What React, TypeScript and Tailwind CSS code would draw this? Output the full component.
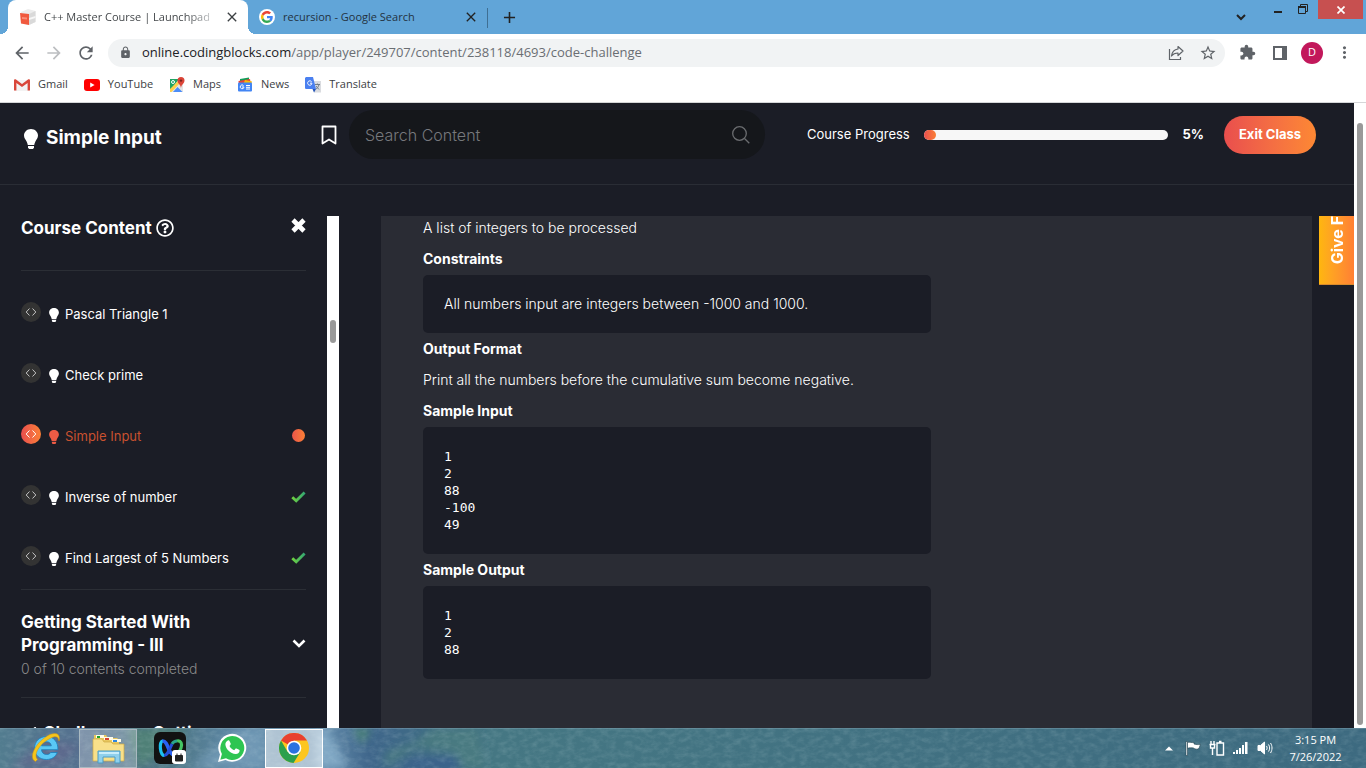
import type { ReactNode } from "react";
import { FaRegQuestionCircle, FaBullhorn } from "react-icons/fa";
import {
  MdArrowBack,
  MdArrowForward,
  MdRefresh,
  MdLock,
  MdStarBorder,
  MdExtension,
  MdMoreVert,
  MdClose,
  MdAdd,
} from "react-icons/md";

type Lesson = { title: string; status: "none" | "active" | "done" };

const lessons: Lesson[] = [
  { title: "Pascal Triangle 1", status: "none" },
  { title: "Check prime", status: "none" },
  { title: "Simple Input", status: "active" },
  { title: "Inverse of number", status: "done" },
  { title: "Find Largest of 5 Numbers", status: "done" },
];

const progress = 5;

/* ---------- small drawings ---------- */

function Bulb({ className }: { className: string }) {
  return (
    <svg viewBox="0 0 14 20" className={className} fill="currentColor" aria-hidden="true">
      <path d="M7 0C3 0 0 2.900 0 6.600c0 2.700 1.600 4 2.600 6 .6 1.200.9 2.400 1.200 3.400h6.400c.3-1 .6-2.200 1.200-3.400 1-2 2.600-3.300 2.600-6C14 2.900 11 0 7 0z" />
      <path d="M4 17h6v1.500L9 20H5l-1-1.500z" />
    </svg>
  );
}

function CodeBadge({ active }: { active: boolean }) {
  return (
    <span
      className={
        active
          ? "flex size-5 items-center justify-center rounded-full bg-linear-to-r from-[#e94e4d] to-[#fb7f34] text-white"
          : "flex size-5 items-center justify-center rounded-full bg-[#333333] text-[#c4c4c4]"
      }
    >
      <svg viewBox="0 0 12 10" className="h-2.5 w-3" fill="none" stroke="currentColor" strokeWidth="1">
        <path d="M4.500 1.500 1.200 5l3.300 3.500M7.500 1.500 10.800 5 7.500 8.500" />
      </svg>
    </span>
  );
}

function Check() {
  return (
    <svg viewBox="0 0 15 12" className="h-3 w-[15px]" fill="none" aria-label="Completed">
      <defs>
        <linearGradient id="done" x1="0" x2="1">
          <stop offset="0" stopColor="#6fd13f" />
          <stop offset="1" stopColor="#35a872" />
        </linearGradient>
      </defs>
      <path d="M1.300 6.300 5.200 9.800 13.600 1.500" stroke="url(#done)" strokeWidth="2.800" />
    </svg>
  );
}

function GoogleLogo() {
  return (
    <svg viewBox="0 0 48 48" className="size-3">
      <path fill="#EA4335" d="M24 9.500c3.540 0 6.710 1.220 9.210 3.600l6.850-6.850C35.900 2.380 30.470 0 24 0 14.620 0 6.510 5.380 2.560 13.220l7.980 6.190C12.430 13.720 17.740 9.500 24 9.500z" />
      <path fill="#4285F4" d="M46.980 24.550c0-1.570-.15-3.090-.38-4.550H24v9.020h12.940c-.58 2.960-2.260 5.480-4.780 7.180l7.730 6c4.510-4.180 7.090-10.360 7.090-17.650z" />
      <path fill="#FBBC05" d="M10.530 28.590c-.48-1.450-.76-2.990-.76-4.590s.27-3.140.76-4.590l-7.980-6.190C.92 16.460 0 20.120 0 24c0 3.880.92 7.540 2.560 10.780l7.970-6.190z" />
      <path fill="#34A853" d="M24 48c6.480 0 11.930-2.130 15.890-5.810l-7.730-6c-2.150 1.450-4.920 2.300-8.160 2.300-6.260 0-11.570-4.220-13.470-9.910l-7.980 6.190C6.510 42.620 14.620 48 24 48z" />
    </svg>
  );
}

function BlocksLogo() {
  return (
    <svg viewBox="0 0 16 16" className="size-4">
      <path d="M1 3 8 0l7.500 2v11L9 16 1 14z" fill="#ececec" />
      <path d="M0 4l9 1v11l-8-1.500z" fill="#f0593e" />
      <path d="M9 5l6.500-3v11L9 16z" fill="#d9d9d9" />
      <path d="M9 9l6.500-2v2L9 11z" fill="#f6f6f6" />
      <path d="M2 8l5 .6v2L2 10z" fill="#fa8c77" />
    </svg>
  );
}

function GmailLogo() {
  return (
    <svg viewBox="0 0 16 12" className="h-3 w-4">
      <path d="M1 1h14v11H1z" fill="#f3f3f3" />
      <path d="M0 1.500C0 .5 1 0 2 .6L8 5l6-4.400c1-.6 2-.1 2 .9V11.500h-2.400V4L8 8 2.400 4v7.500H0z" fill="#d9473a" />
    </svg>
  );
}

function YouTubeLogo() {
  return (
    <svg viewBox="0 0 16 12" className="h-3 w-4">
      <rect width="16" height="12" rx="3" fill="#f00" />
      <path d="M6.200 3.500v5l4.400-2.500z" fill="#fff" />
    </svg>
  );
}

function MapsLogo() {
  return (
    <svg viewBox="0 0 16 16" className="size-4">
      <path d="M1 2h13v13H1z" fill="#e4e4e4" />
      <path d="M1 2h9L1 14z" fill="#1fa463" />
      <path d="M1 12 10 3l2 2-9.500 10H1z" fill="#ffd04b" />
      <path d="M4 15l4.500-5 5 5z" fill="#4b8df8" />
      <circle cx="4" cy="5" r="1.500" fill="none" stroke="#fff" />
      <path d="M12 0a3.500 3.500 0 0 0-3.500 3.500C8.500 6.500 11.500 7 12 11c.5-4 3.500-4.500 3.500-7.500A3.500 3.500 0 0 0 12 0z" fill="#db4437" />
      <circle cx="12" cy="3.600" r="1.200" fill="#7b231e" />
    </svg>
  );
}

function NewsLogo() {
  return (
    <svg viewBox="0 0 16 16" className="size-4">
      <path d="M3 2 12 .5V8H3z" fill="#0f9d58" />
      <path d="M1.500 4 13 2l1 6H2z" fill="#ea4335" />
      <path d="M8 3l7 1.500L14 8H6z" fill="#fbbc04" />
      <rect x="1" y="5.500" width="14" height="9" rx="1" fill="#4285f4" />
      <path d="M7 10H4.900M6.500 8.500a1.900 1.900 0 1 0 .5 1.700M9 8.500h4M9 10.300h4M9 12h4" stroke="#fff" fill="none" />
    </svg>
  );
}

function TranslateLogo() {
  return (
    <svg viewBox="0 0 16 16" className="size-4">
      <path d="M6 4h10v11.500H9z" fill="#dadce0" />
      <path d="M1 0h7l3 12H1.500C.5 12 0 11.500 0 11V1z" fill="#4a80f0" />
      <path d="M7.500 12H11l-2 3.500z" fill="#2454b8" />
      <path d="M7 6.200H5M6.600 4.700A2.200 2.200 0 1 0 7 6.500" stroke="#fff" fill="none" />
      <path d="M10 7.500h5M12.400 6.500v1M14 7.500c-.5 2.500-2 4-3 4.500M11.300 9c.7 1.500 2 3 3 3.500" stroke="#6b7680" fill="none" strokeWidth=".9" />
    </svg>
  );
}

/* ---------- browser window ---------- */

function BrowserChrome() {
  return (
    <div className="shrink-0 border-b border-[#d5d6d8] bg-white font-['Open_Sans','Noto_Sans',sans-serif] text-[11px] text-[#3c4043]">
      <div className="flex h-[34px] items-start bg-[#61a5d8] pl-2 pr-[3px]">
        <div className="relative flex h-[34px] w-[240px] items-center rounded-t-lg bg-white pl-3 pr-2">
          <span className="absolute -left-2 bottom-0 size-2 bg-[radial-gradient(circle_at_0_0,#61a5d8_8px,#fff_8px)]" />
          <span className="absolute -right-2 bottom-0 size-2 bg-[radial-gradient(circle_at_100%_0,#61a5d8_8px,#fff_8px)]" />
          <BlocksLogo />
          <span className="ml-2 bg-linear-to-r from-[#3c4043] from-85% to-[#c4c6c8] bg-clip-text whitespace-nowrap text-transparent">
            C++ Master Course | Launchpad
          </span>
          <button aria-label="Close tab" className="ml-auto text-[#3c4043]">
            <MdClose size={16} />
          </button>
        </div>
        <div className="flex h-[34px] w-[239px] items-center pl-[11px] pr-2 text-[#23323f]">
          <span className="flex size-4 items-center justify-center rounded-full bg-white">
            <GoogleLogo />
          </span>
          <span className="ml-2 whitespace-nowrap">recursion - Google Search</span>
          <button aria-label="Close tab" className="ml-auto text-[#222]">
            <MdClose size={16} />
          </button>
        </div>
        <span className="mt-2 h-5 w-px bg-[#3f6f93]" />
        <button aria-label="New tab" className="mt-2 ml-3 text-[#222]">
          <MdAdd size={19} />
        </button>
        <div className="ml-auto flex items-start text-[#222]">
          <button aria-label="Search tabs" className="mt-3 mr-[27px]">
            <svg viewBox="0 0 12 10" className="h-2.5 w-3" fill="none" stroke="currentColor" strokeWidth="2">
              <path d="m2 3 4 4 4-4" />
            </svg>
          </button>
          <button aria-label="Minimize" className="mt-[11px] mr-4 h-0.5 w-2 bg-[#222]" />
          <button aria-label="Restore" className="mt-1 mr-2.5">
            <svg viewBox="0 0 10 10" className="size-2.5" fill="none" stroke="currentColor">
              <path d="M2.500 2V.5h7v7H8" />
              <path d="M.5 3h7v6.500h-7z" />
              <path d="M0 3h8" strokeWidth="2" />
            </svg>
          </button>
          <button aria-label="Close window" className="flex h-[19px] w-[45px] items-center justify-center bg-[#c75050] text-white">
            <svg viewBox="0 0 8 8" className="size-2" stroke="currentColor" strokeWidth="1.700">
              <path d="m.5.5 7 7m0-7-7 7" />
            </svg>
          </button>
        </div>
      </div>

      <div className="flex h-[37px] items-center pr-3 pl-3 text-[#5f6368]">
        <button aria-label="Back"><MdArrowBack size={20} /></button>
        <button aria-label="Forward" className="ml-3 text-[#bcbec1]"><MdArrowForward size={20} /></button>
        <button aria-label="Reload" className="ml-3"><MdRefresh size={20} /></button>
        <div className="ml-3 flex h-7 flex-1 items-center rounded-full bg-[#f1f3f4] pr-2 pl-[11px]">
          <MdLock size={13} />
          <a href="#url" className="ml-2.5 text-[13px] text-[#6a6e73]">
            <span className="text-[#202124]">online.codingblocks.com</span>
            /app/player/249707/content/238118/4693/code-challenge
          </a>
          <button aria-label="Share" className="ml-auto">
            <svg viewBox="0 0 16 16" className="size-4" fill="none" stroke="currentColor" strokeWidth="1.200">
              <path d="M1.500 4v10.500h11V12" />
              <path d="M10 1.500 15 6l-5 4.500V8C7 8 5 9 3.500 11 4 7 6 4.500 10 4z" strokeLinejoin="round" />
            </svg>
          </button>
          <button aria-label="Bookmark" className="ml-[15px]"><MdStarBorder size={18} /></button>
        </div>
        <button aria-label="Extensions" className="ml-3.5"><MdExtension size={17} /></button>
        <button aria-label="Side panel" className="ml-[17px]">
          <svg viewBox="0 0 14 14" className="size-3.5">
            <path d="M1 1h12v12H1z" fill="none" stroke="currentColor" strokeWidth="2" />
            <path d="M9 1h4v12H9z" fill="currentColor" />
          </svg>
        </button>
        <button className="ml-3.5 flex size-[22px] items-center justify-center rounded-full bg-[#c2185b] text-white">D</button>
        <button aria-label="Menu" className="ml-3"><MdMoreVert size={19} /></button>
      </div>

      <nav className="flex h-[31px] items-center pb-1 pl-3.5">
        <Bookmark icon={<GmailLogo />} label="Gmail" />
        <Bookmark icon={<YouTubeLogo />} label="YouTube" />
        <Bookmark icon={<MapsLogo />} label="Maps" />
        <Bookmark icon={<NewsLogo />} label="News" />
        <Bookmark icon={<TranslateLogo />} label="Translate" />
      </nav>
    </div>
  );
}

function Bookmark({ icon, label }: { icon: ReactNode; label: string }) {
  return (
    <a href="#bookmark" className="mr-4 flex items-center gap-2">
      {icon}
      {label}
    </a>
  );
}

/* ---------- course player ---------- */

function Header() {
  return (
    <header className="flex h-[82px] shrink-0 items-center border-b border-[#2a2d35] pb-[18px]">
      <div className="flex w-[349px] items-center pr-3 pl-6">
        <div className="flex items-center gap-2 pt-2">
          <Bulb className="h-5 w-3.5" />
          <h1 className="text-[19px] font-bold">Simple Input</h1>
        </div>
        <button aria-label="Bookmark lesson" className="ml-auto">
          <svg viewBox="0 0 16 20" className="h-5 w-4" fill="none" stroke="currentColor" strokeWidth="1.800">
            <path d="M1.500 1.500h13v17L8 14.500l-6.500 4z" strokeLinejoin="round" />
          </svg>
        </button>
      </div>
      <label className="flex h-[49px] w-[416px] items-center rounded-full bg-[#15171b] pr-[15px] pl-4">
        <input
          type="text"
          aria-label="Search Content"
          placeholder="Search Content"
          className="min-w-0 flex-1 bg-transparent text-base font-light outline-none placeholder:text-[#77797d]"
        />
        <svg viewBox="0 0 18 18" className="size-[18px] text-[#6b6d70]" fill="none" stroke="currentColor" strokeWidth="1.300">
          <circle cx="7.500" cy="7.500" r="6.800" />
          <path d="m12.500 12.500 4.800 4.800" />
        </svg>
      </label>
      <div className="ml-[42px] flex flex-1 items-center pr-[38px]">
        <span className="text-[13px]">Course Progress</span>
        <div className="ml-3.5 h-2.5 flex-1 rounded-full bg-[#f7f7f7]">
          <div
            className="h-2.5 rounded-full bg-linear-to-r from-[#e94e4d] to-[#fb7f34]"
            style={{ width: `${progress}%` }}
          />
        </div>
        <span className="ml-3.5 text-[13px] font-bold">{progress}%</span>
        <button className="ml-5 h-[38px] w-[92px] rounded-full bg-linear-to-r from-[#e94e4d] to-[#fd8833] text-[13px] font-bold">
          Exit Class
        </button>
      </div>
    </header>
  );
}

function LessonRow({ lesson }: { lesson: Lesson }) {
  const active = lesson.status === "active";
  return (
    <li className="flex h-[61px] items-center">
      <span className="pb-1.5">
        <CodeBadge active={active} />
      </span>
      <a
        href="#lesson"
        className={active ? "ml-2 flex items-center text-[13px] text-[#c9512f]" : "ml-2 flex items-center text-[13px]"}
      >
        <Bulb className={active ? "h-3.5 w-2.5 text-[#ee5b45]" : "h-3.5 w-2.5"} />
        <span className="ml-1.5">{lesson.title}</span>
      </a>
      <span className="ml-auto flex w-[15px] justify-center pb-0.5">
        {lesson.status === "done" && <Check />}
        {active && <span className="block size-[13px] rounded-full bg-linear-to-r from-[#ec5549] to-[#fb7f34]" />}
      </span>
    </li>
  );
}

function Sidebar() {
  return (
    <aside className="flex w-[339px] shrink-0">
      <div className="flex-1 overflow-hidden pr-[21px] pl-[21px]">
        <div className="flex h-[55px] items-start border-b border-[#2b2e35]">
          <h2 className="flex items-center gap-1 text-[17px] leading-6 font-bold">
            Course Content
            <FaRegQuestionCircle size={18} />
          </h2>
          <button aria-label="Close sidebar" className="mt-0.5 ml-auto">
            <svg viewBox="0 0 15 15" className="size-[15px]" stroke="currentColor" strokeWidth="4.600">
              <path d="m2 2 11 11M13 2 2 13" />
            </svg>
          </button>
        </div>
        <ul className="border-b border-[#2b2e35] pt-[13px]">
          {lessons.map((lesson) => (
            <LessonRow key={lesson.title} lesson={lesson} />
          ))}
        </ul>
        <section className="flex items-center border-b border-[#2b2e35] pt-[21px] pb-[17px]">
          <div className="w-[200px]">
            <h3 className="text-[17px] leading-[23px] font-bold">Getting Started With Programming - III</h3>
            <p className="text-sm leading-[23px] font-light text-[#8b8b8b]">0 of 10 contents completed</p>
          </div>
          <button aria-label="Expand section" className="mb-1 ml-auto">
            <svg viewBox="0 0 14 9" className="h-[9px] w-3.5" fill="none" stroke="currentColor" strokeWidth="2.600">
              <path d="m1.500 1.500 5.500 5.500 5.500-5.500" />
            </svg>
          </button>
        </section>
        <section className="pt-6">
          <h3 className="flex items-center gap-1.5 text-[17px] leading-[23px] font-bold whitespace-nowrap">
            <FaBullhorn size={16} />
            Challenges - Getting
          </h3>
        </section>
      </div>
      <div className="w-3 bg-white px-[3px] pt-[104px]">
        <div className="h-[23px] rounded-full bg-[#999999]" />
      </div>
    </aside>
  );
}

function Block({ children }: { children: ReactNode }) {
  return <div className="w-[508px] max-w-full rounded-[5px] bg-[#1b1d26] p-[21px] leading-4">{children}</div>;
}

function Sample({ lines }: { lines: string[] }) {
  return (
    <Block>
      <pre className="font-['DejaVu_Sans_Mono',monospace] text-[13px] leading-[17px]">{lines.join("\n")}</pre>
    </Block>
  );
}

function Problem() {
  return (
    <main className="ml-[42px] min-w-0 flex-1 bg-[#2a2c34] px-[42px] text-sm font-light">
      <p className="mb-[3px] leading-6">A list of integers to be processed</p>
      <h4 className="leading-8 font-bold">Constraints</h4>
      <Block>All numbers input are integers between -1000 and 1000.</Block>
      <h4 className="leading-8 font-bold">Output Format</h4>
      <p className="leading-[30px]">Print all the numbers before the cumulative sum become negative.</p>
      <h4 className="leading-8 font-bold">Sample Input</h4>
      <Sample lines={["1", "2", "88", "-100", "49"]} />
      <h4 className="leading-8 font-bold">Sample Output</h4>
      <Sample lines={["1", "2", "88"]} />
    </main>
  );
}

function Player() {
  return (
    <div className="flex min-h-0 flex-1 bg-[#1b1d26] font-['Inter','Open_Sans',sans-serif] text-white">
      <div className="flex min-w-0 flex-1 flex-col">
        <Header />
        <div className="mt-[31px] flex min-h-0 flex-1 overflow-hidden">
          <Sidebar />
          <Problem />
          <button className="ml-[7px] flex h-[69px] w-[35px] items-end justify-center overflow-hidden border-b border-[#d98a2c] bg-linear-to-r from-[#ffb60d] to-[#ff7f33] pb-5">
            <span className="rotate-180 text-base font-bold whitespace-nowrap [writing-mode:vertical-rl]">
              Give Feedback
            </span>
          </button>
        </div>
      </div>
      <div className="flex w-3 flex-col bg-white px-[3px] pt-5 pb-[3px]">
        <div className="flex-1 rounded-full bg-[#999999]" />
      </div>
    </div>
  );
}

/* ---------- desktop taskbar ---------- */

function Wallpaper() {
  return (
    <svg className="absolute inset-0 h-full w-full" viewBox="0 0 1366 40" preserveAspectRatio="none" aria-hidden="true">
      <defs>
        <linearGradient id="sea" x1="0" x2="1">
          <stop offset="0" stopColor="#527c8f" />
          <stop offset=".06" stopColor="#55708f" />
          <stop offset=".12" stopColor="#4d7583" />
          <stop offset=".17" stopColor="#5c86a3" />
          <stop offset=".24" stopColor="#6189a9" />
          <stop offset=".27" stopColor="#3f668b" />
          <stop offset=".31" stopColor="#3f6b85" />
          <stop offset=".36" stopColor="#457783" />
          <stop offset="1" stopColor="#3d6a80" />
        </linearGradient>
        <filter id="soft" x="-20%" y="-50%" width="140%" height="200%">
          <feGaussianBlur stdDeviation="4" />
        </filter>
        <filter id="grain" x="0" y="0" width="100%" height="100%">
          <feTurbulence type="fractalNoise" baseFrequency=".12 .2" numOctaves="3" seed="4" />
          <feColorMatrix values="0 0 0 0 .75  0 0 0 0 .9  0 0 0 0 .9  .9 0 0 0 -.35" />
        </filter>
      </defs>
      <rect width="1366" height="40" fill="url(#sea)" />
      <g filter="url(#soft)">
        <path d="M10 40 45 10 78 18 60 40z" fill="#665f8c" opacity=".5" />
        <path d="M128 0h60l-20 22-30 18z" fill="#4f8077" />
        <path d="M190 40 240 0h25v40z" fill="#7da3bf" opacity=".6" />
        <path d="M316 0h10l22 40h-32z" fill="#80a7c4" />
        <path d="M352 0h20l-10 17z" fill="#4c8279" />
        <path d="M384 40l2-16 30-10 16-14h45l8 40h-24l-10-16-36-4z" fill="#4a7c80" opacity=".8" />
        <path d="M396 42l16-12 44-2 6 14z" fill="#3b628c" />
      </g>
      <rect width="1366" height="40" filter="url(#grain)" opacity=".3" />
      <path d="M0 .5h1366" stroke="#8fb0bd" strokeOpacity=".35" />
    </svg>
  );
}

function ExplorerE() {
  return (
    <svg viewBox="0 0 32 32" className="size-8">
      <path d="M16.500 4.500c-7 0-12 5-12 11.800 0 6.800 5 11.200 12 11.200 5 0 9-2.500 10.800-7h-6.600c-1 1.500-2.300 2-4 2-3 0-5-1.700-5.200-4.800h16.400C28.300 10.500 24 4.500 16.500 4.500zm-5 9.300c.5-2.500 2.300-4 5-4s4.500 1.500 4.800 4z" fill="#5ac8f5" stroke="#197fbd" strokeWidth=".8" />
      <path d="M5.500 29.500C-2 26 5 11 18 3.500 25 0 31 1 29 9c-.5-5-4-5.500-9-2.500C9 12 3 23 7.500 27.500z" fill="#f6c51b" stroke="#cf9410" strokeWidth=".5" />
    </svg>
  );
}

function FolderIcon() {
  return (
    <svg viewBox="0 0 34 32" className="h-8 w-[34px]">
      <path d="M3 3h12l2 3h9l2 2v5H3z" fill="#e8c75e" />
      <path d="M5 3h8v3H5zM13 5h9v3h-9zM21 7h9v3h-9z" fill="#fffbe8" />
      <path d="M6 4h3v2H6z" fill="#21a22b" />
      <path d="M14 6h4v2h-4z" fill="#d8442f" />
      <path d="M22 8h4v2h-4z" fill="#2d86e0" />
      <path d="M2 7h9l2 3h7l2 2h11v17H2z" fill="#f8e08a" stroke="#cfa944" strokeWidth=".7" />
      <path d="M7 31V19h22v12h-5v-6H12v6z" fill="#8fd0ec" stroke="#4b9cc5" />
      <path d="M8 20h20v2H8z" fill="#c8edfb" />
    </svg>
  );
}

function WebexIcon() {
  return (
    <svg viewBox="0 0 32 32" className="size-8">
      <rect width="32" height="32" rx="6" fill="#121212" />
      <path d="M23 9c4-1 5.500 3 4 7-1 3-2.500 5-4.500 6.500" fill="none" stroke="#45c463" strokeWidth="3.200" />
      <path d="M18 12c1.500-2.500 3-3 5-3" fill="none" stroke="#2aa58c" strokeWidth="3" />
      <path d="M10.500 23.500C6 23.500 4.500 9 9 9" fill="none" stroke="#1cc0ee" strokeWidth="3.200" />
      <path d="M8.500 9c6-.5 5.500 14 11.500 13.500" fill="none" stroke="#2a62f2" strokeWidth="3.600" />
      <path d="M10 23.500c4 0 5.500-6.500 8-11.500" fill="none" stroke="#2450d8" strokeWidth="3" />
      <rect x="18" y="18" width="14" height="14" rx="3" fill="#fff" />
      <path d="M21.500 23.500h7v5.500h-7zM23 21.500v2M27 21.500v2" fill="#222" stroke="#222" />
    </svg>
  );
}

function WhatsAppIcon() {
  return (
    <svg viewBox="0 0 30 30" className="size-[30px]">
      <path d="M1 29 3 21.500A14 14 0 1 1 8.500 27z" fill="#fff" />
      <path d="M3.300 26.700 4.900 21A12 12 0 1 1 9 25.200z" fill="#2ec551" />
      <path d="M10.800 7.600c.6-.5 1.400-.3 1.700.3l1.200 2.700c.2.500 0 1-.4 1.400l-.8.900c1 2 2.600 3.500 4.700 4.300l1.100-1.300c.3-.4.700-.5 1.200-.3l2.600 1.200c.5.300.6.700.5 1.300-.4 2-2 3-3.900 2.900-5.500-.5-9.900-5-10.300-9.300-.1-1.700.9-3.200 2.400-4.100z" fill="#fff" />
    </svg>
  );
}

function ChromeIcon() {
  return (
    <svg viewBox="0 0 30 30" className="size-[30px]">
      <circle cx="15" cy="15" r="15" fill="#fcc61f" />
      <path d="M15 15 2 7.500A15 15 0 0 1 28 7.500H15z" fill="#e8402f" />
      <path d="M2 7.500A15 15 0 0 0 14.500 30L21.500 18.700 8.500 18.700z" fill="#2ca04d" />
      <circle cx="15" cy="15" r="7.300" fill="#fff" />
      <circle cx="15" cy="15" r="5.800" fill="#2b72e0" />
    </svg>
  );
}

function Taskbar() {
  return (
    <footer className="relative h-10 shrink-0 overflow-hidden bg-[#42717f] font-['Open_Sans','Noto_Sans',sans-serif] text-[11px] text-white">
      <Wallpaper />
      <div className="relative flex h-10 items-center">
        <div className="flex h-10 items-center gap-1 pl-[17px]">
          <button aria-label="Internet Explorer" className="flex h-10 w-[58px] items-center justify-center">
            <ExplorerE />
          </button>
          <button aria-label="File Explorer" className="flex h-[39px] w-[58px] items-center justify-center border border-[#a9b9c1] bg-white/25">
            <FolderIcon />
          </button>
          <button aria-label="Webex" className="flex h-10 w-[58px] items-center justify-center">
            <WebexIcon />
          </button>
          <button aria-label="WhatsApp" className="flex h-10 w-[58px] items-center justify-center">
            <WhatsAppIcon />
          </button>
          <button aria-label="Chrome" className="flex h-[39px] w-[58px] items-center justify-center border border-white bg-white/50">
            <ChromeIcon />
          </button>
        </div>
        <div className="ml-auto flex items-center pr-6">
          <svg viewBox="0 0 8 5" className="h-[5px] w-2"><path d="M0 4.500 4 .5l4 4z" fill="#fff" /></svg>
          <svg viewBox="0 0 16 16" className="ml-3 size-4" stroke="#22424f" strokeWidth=".6">
            <path d="M1 1.500h1.500v14H1z" fill="#fff" />
            <path d="M2.500 2.500c2-1 4 .5 6.500 0v1.500c2 .5 4 1 6.500.2-1 2.300-1 4-2.500 4.800-2 .5-3.500-.3-4.500-1-2-.3-4-.3-6 .3z" fill="#fff" />
          </svg>
          <svg viewBox="0 0 16 16" className="ml-2 size-4" fill="none" stroke="#fff" strokeWidth="1.400">
            <path d="M2 1v3M5 1v3M.5 4.500h6M1.500 5v3h4V5M3.500 8v7" />
            <path d="M8 3h6.500v12H8zM10 1.500h2.500" />
          </svg>
          <svg viewBox="0 0 16 16" className="ml-2 size-4" fill="#fff">
            <path d="M0 12h2v2H0zM3 10h2v4H3zM6 8h2v6H6zM9 5h2v9H9zM12 2h2.500v12H12z" />
          </svg>
          <svg viewBox="0 0 16 16" className="ml-2 size-4" fill="none" stroke="#fff">
            <path d="M1 5.500h2.500L7.500 2v12L3.500 10.500H1z" fill="#fff" />
            <path d="M9.500 6c.8 1.200.8 2.800 0 4M11.500 4.500c1.500 2 1.500 5 0 7M13.500 3c2 3 2 7 0 10" />
          </svg>
          <div className="ml-4 w-[53px] text-center leading-[17px] whitespace-nowrap">
            <div>3:15 PM</div>
            <div>7/26/2022</div>
          </div>
        </div>
      </div>
    </footer>
  );
}

export default function App() {
  return (
    <div className="flex h-screen flex-col overflow-hidden">
      <BrowserChrome />
      <Player />
      <Taskbar />
    </div>
  );
}
